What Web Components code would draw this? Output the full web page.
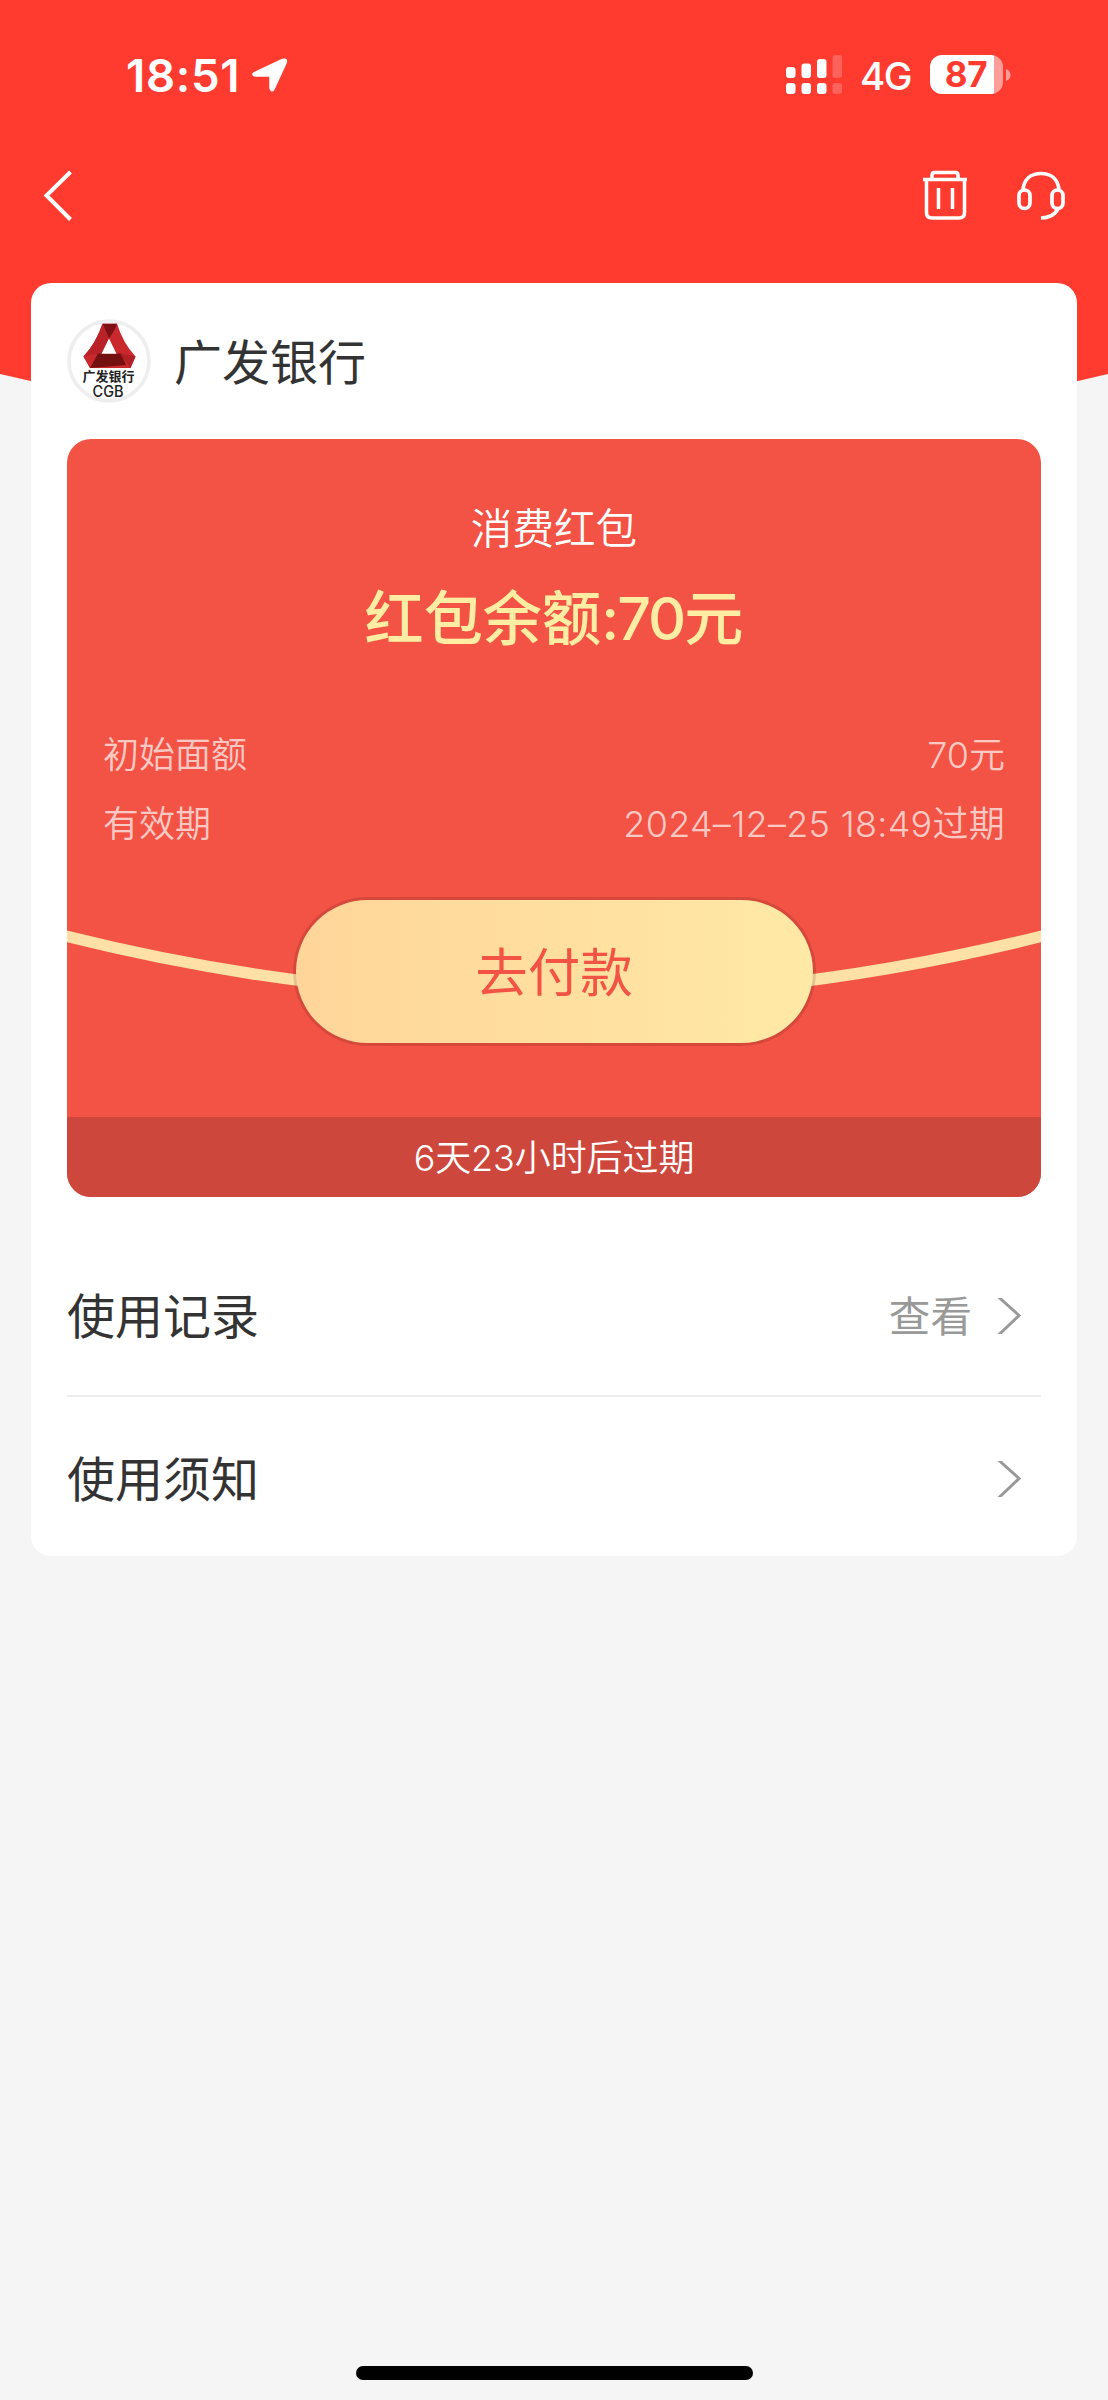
<!DOCTYPE html>
<html lang="zh-CN">
<head>
<meta charset="utf-8">
<title>消费红包</title>
<style>
html,body{margin:0;padding:0}
body{width:1108px;height:2400px;background:#f5f5f5;overflow:hidden;font-family:Inter,"Noto Sans CJK SC",sans-serif}
</style>
</head>
<body>
<coupon-app></coupon-app>
<script>
function define(name, html){
  const t=document.createElement('template');
  t.innerHTML=html;
  customElements.define(name, class extends HTMLElement{
    constructor(){super();this.attachShadow({mode:'open'}).appendChild(t.content.cloneNode(true));}
  });
}

define('status-bar', `
<style>
:host{display:flex;height:150px;box-sizing:border-box;padding:49px 97.500px 0 126px;align-items:flex-start;justify-content:space-between;color:#fff}
.l,.r{display:flex;height:52px;align-items:center}
.time{font-size:45.500px;font-weight:600;letter-spacing:.7px;line-height:52px;width:114px;white-space:nowrap;padding-top:1px}
.net{font-size:38.500px;font-weight:450;line-height:52px;margin:2px 0 0 17px;width:53px;letter-spacing:-1.500px}
.bat{width:73px;height:39px;border-radius:12px;margin-left:17px;box-sizing:border-box;padding-right:1px;background:linear-gradient(90deg,#fff 64px,#ff9d98 64px);color:#ff3b30;font-size:35px;font-weight:700;line-height:38px;text-align:center;letter-spacing:-.3px}
svg{display:block}
.r>*{position:relative;top:-.5px}
</style>
<div class="l"><span class="time">18:51</span>
<svg width="38" height="38" viewBox="0 0 38 38" style="margin:1px 0 0 10.500px"><path d="M3 16.500 31.500 3Q36 1.500 34.500 6L22.500 32Q20.500 35 19.500 31V18.500H5Q1.500 18 3 16.500Z" fill="#fff" stroke="#fff" stroke-width="2.500" stroke-linejoin="round"/></svg></div>
<div class="r">
<svg width="57" height="39" viewBox="0 0 57 39" fill="#fff"><rect x="0" y="12" width="9.500" height="11" rx="3"/><rect x="15.500" y="8.500" width="9.500" height="14.500" rx="3"/><rect x="31" y="4" width="9.500" height="19" rx="3"/><g opacity=".2"><rect x="46.500" width="9.500" height="23" rx="3"/><rect x="46.500" y="28" width="9.500" height="11" rx="3"/></g><rect x="0" y="28" width="9.500" height="11" rx="3"/><rect x="15.500" y="28" width="9.500" height="11" rx="3"/><rect x="31" y="28" width="9.500" height="11" rx="3"/></svg>
<span class="net">4G</span><span class="bat">87</span>
<svg width="5" height="12" viewBox="0 0 5 12" style="margin-left:2.500px"><path d="M0 0Q4.500 1.500 4.500 6T0 12Z" fill="#ff9d98"/></svg>
</div>`);

define('nav-bar', `
<style>
:host{display:flex;height:90px;align-items:center;justify-content:space-between;padding:0 43.500px 2px 42px}
div{display:flex;gap:48.500px}
svg{display:block;overflow:visible}
</style>
<svg width="30" height="48" viewBox="0 0 30 48"><path d="M28.500 1 4.500 24.500 28.500 48.500" fill="none" stroke="#fff" stroke-width="4"/></svg>
<div>
<svg width="46" height="50" viewBox="0 0 46 50" fill="none" stroke="#fff" stroke-width="3.500"><path d="M1 9.500H45M10 9V5Q10 2.500 12.500 2.500H33.500Q36 2.500 36 5V9M4.500 9.500V42.500Q4.500 48 10 48H37Q42.500 48 42.500 42.500V9.500M16.500 18V39M30.500 18V39"/></svg>
<svg width="48" height="50" viewBox="0 0 48 50" fill="none" stroke="#fff" stroke-width="3.700"><path d="M6 20C7 9 14 3.500 24 3.500S41 9 42 20M41 39Q36 48 24 48"/><rect x="2" y="20" width="11" height="18.500" rx="5.500"/><rect x="35" y="20" width="11" height="18.500" rx="5.500"/></svg>
</div>`);

define('bank-logo', `
<style>
:host{display:block;width:84px;height:84px}
svg{display:block;font-family:Inter,"Noto Sans CJK SC",sans-serif}
</style>
<svg width="84" height="84" viewBox="0 0 84 84">
<circle cx="42" cy="42" r="40" fill="#fff" stroke="#eee" stroke-width="3.600"/>
<path d="M35.500 4.700H50Q56 24 68.500 37.500L63.500 49H23L16.500 37.500Q29 24 35.500 4.700Z" fill="#c9282c"/>
<path d="M35.500 4.700H50L47.500 11 42 19.500Z" fill="#7d1015"/>
<path d="M42 19.500 35.500 4.700Q29 24 16.500 37.500L27.500 36 35 34.500Z" fill="#b92328"/>
<path d="M29.500 34.500H54L59 46 23 49Z" fill="#74100f"/>
<path d="M16.500 37.500 23 49 31 34.500Z" fill="#c9282c"/>
<path d="M68.500 37.500 63.500 49 53 34.500Z" fill="#b02025"/>
<path d="M42 19.500 49.500 34.700H34.500Z" fill="#fff"/>
<text x="41.500" y="62" text-anchor="middle" font-size="13" font-weight="600" fill="#222">广发银行</text>
<text x="41" y="78.300" text-anchor="middle" font-size="15.500" font-weight="450" fill="#222" textLength="31" lengthAdjust="spacingAndGlyphs">CGB</text>
</svg>`);

define('detail-row', `
<style>
:host{display:flex;justify-content:space-between;height:68.500px;line-height:67px;font-size:36px;font-weight:350;color:rgba(255,255,255,.7);white-space:nowrap;font-feature-settings:"calt" 0}
</style><slot name="label"></slot><slot></slot>`);

define('pay-button', `
<style>
:host{display:block;position:relative;width:517px;height:143px;border:3px solid rgba(0,0,0,.12);border-radius:75px;background:linear-gradient(90deg,#ffd59a,#ffe9a6) padding-box;text-align:center;font-size:52.500px;line-height:146px;color:#f35344}
</style><slot></slot>`);

define('red-packet', `
<style>
:host{display:flex;flex-direction:column;height:758px;border-radius:24px;background:#f35344;overflow:hidden;text-align:center;color:#fff;position:relative;font-feature-settings:"calt" 0}
.name{font-size:41.600px;line-height:60px;margin-top:60px;font-weight:350}
.bal{font-size:59.200px;line-height:80px;margin-top:20px;font-weight:500;color:#ffeda3}
.rows{padding:0 36px;margin-top:63px}
.arc{position:absolute;left:0;top:480px}
.pay{display:flex;justify-content:center;margin-top:38px}
.foot{margin-top:auto;height:80px;line-height:83px;background:#ce473c;font-size:36px;font-weight:350;letter-spacing:-.1px}
</style>
<svg class="arc" width="974" height="90" viewBox="0 0 974 90"><path d="M-10 14.900Q487 141.200 984 14.900" fill="none" stroke="#ffe0a6" stroke-width="11.500"/></svg>
<div class="name"><slot name="name"></slot></div>
<div class="bal"><slot name="balance"></slot></div>
<div class="rows"><slot name="rows"></slot></div>
<div class="pay"><slot name="action"></slot></div>
<div class="foot"><slot name="expiry"></slot></div>`);

define('link-row', `
<style>
:host{display:flex;align-items:center;height:158px;font-size:48px;color:#333}
:host(:last-of-type){height:164px}
.k{padding-bottom:6px}
.v{margin-left:auto;font-size:41.600px;color:#999;margin-right:25px;padding-bottom:5px}
svg{display:block;margin-right:19px}
</style><span class="k"><slot></slot></span><span class="v"><slot name="value"></slot></span>
<svg width="25" height="36" viewBox="0 0 25 36"><path d="M1.500-1 22 17.500 1.500 37" fill="none" stroke="#999" stroke-width="3"/></svg>`);

define('coupon-card', `
<style>
:host{display:block;margin:0 31px;height:1273px;box-sizing:border-box;padding:36px 36px 0;border-radius:20px;background:#fff}
.head{display:flex;align-items:center;gap:23px;height:84px;margin-bottom:36px;font-size:48px;color:#333}
.t{padding-bottom:5px}
.list{padding-top:40px}
.d{letter-spacing:-2px}
.date{letter-spacing:.26px}
hr{border:0;height:2px;margin:0;background:#eee}
</style>
<div class="head"><bank-logo></bank-logo><span class="t">广发银行</span></div>
<red-packet>
<span slot="name">消费红包</span><span slot="balance">红包余额<span class="d">:70</span>元</span>
<detail-row slot="rows"><span slot="label">初始面额</span>70元</detail-row>
<detail-row slot="rows"><span slot="label">有效期</span><span class="date">2024–12–25 18:49过期</span></detail-row>
<pay-button slot="action">去付款</pay-button>
<span slot="expiry">6天23小时后过期</span>
</red-packet>
<div class="list"><link-row>使用记录<span slot="value">查看</span></link-row><hr><link-row>使用须知</link-row></div>`);

define('coupon-app', `
<style>
:host{display:flex;flex-direction:column;width:1108px;height:2400px;position:relative;isolation:isolate}
.bg{position:absolute;left:0;top:0;z-index:-1}
nav-bar{margin-bottom:41px}
.home{width:397px;height:13.500px;border-radius:7px;background:#000;margin:auto auto 20.500px}
</style>
<svg class="bg" width="1108" height="460" viewBox="0 0 1108 460"><path d="M0 0H1108V374Q554 508 0 374Z" fill="#ff3b30"/></svg>
<status-bar></status-bar><nav-bar></nav-bar><coupon-card></coupon-card><div class="home"></div>`);
</script>
</body>
</html>
